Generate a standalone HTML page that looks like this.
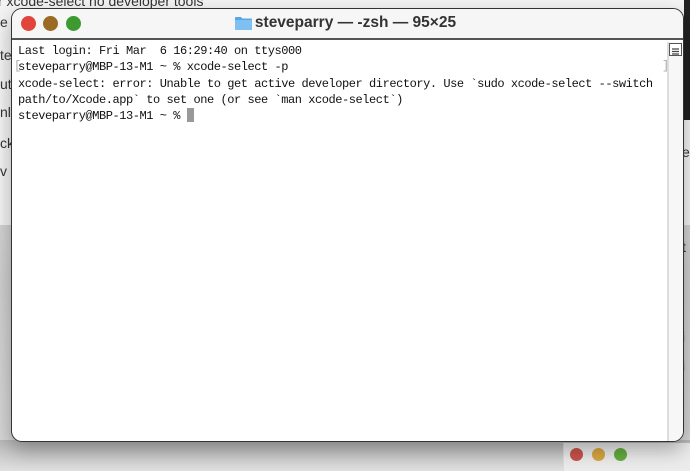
<!DOCTYPE html>
<html><head><meta charset="utf-8"><style>
*{margin:0;padding:0;box-sizing:border-box}
body{width:690px;height:471px;overflow:hidden;position:relative;background:linear-gradient(#e2e2e2,#cfcfcf 60%,#d8d8d8);font-family:"Liberation Sans",sans-serif}
.bgtop{position:absolute;left:0;top:0;width:690px;height:225px;background:#f4f4f4}
.bgtxt{position:absolute;font-size:14px;color:#333;white-space:nowrap}
.dark{position:absolute;left:684px;top:0;width:6px;height:120px;background:#222}
.shadow{position:absolute;left:0;top:440px;width:690px;height:31px;background:linear-gradient(#b8b8b8,#e0e0e0)}
.panel{position:absolute;left:563px;top:443px;width:127px;height:28px;background:#ececec;border-left:1px solid #ddd}
.pd{position:absolute;top:448px;width:13px;height:13px;border-radius:50%}
.win{position:absolute;left:11px;top:8px;width:673px;height:434px;background:#fff;border:1px solid #333;border-radius:11px;overflow:hidden;box-shadow:0 8px 20px rgba(0,0,0,.3)}
.tb{height:31px;background:#f6f6f6;border-bottom:2px solid #555;position:relative}
.dot{position:absolute;top:7px;width:15px;height:15px;border-radius:50%}
.title{position:absolute;left:0;right:0;top:5px;text-align:center;font-weight:bold;font-size:15.5px;color:#333;padding-left:16px}
.folder{position:absolute;left:223px;top:7px;width:17px;height:14px}
.term{position:absolute;left:6px;top:34px;font-family:"Liberation Mono",monospace;font-size:12px;letter-spacing:-0.45px;line-height:16.3px;color:#111;white-space:pre}
.sb{position:absolute;left:655px;top:33px;width:18px;height:401px;background:#f7f7f7;border-left:2px solid #ddd}
.sbi{position:absolute;left:657px;top:34px;width:13px;height:13px;border:1px solid #555;background:#fff}
.cur{display:inline-block;width:7px;height:14px;background:#999;vertical-align:-3px}
.br{position:absolute;font-family:"Liberation Mono",monospace;font-size:12px;color:#aaa}
</style></head><body>
<div class="bgtop"></div>
<div class="bgtxt" style="left:-2px;top:-7px">r xcode-select no developer tools</div>
<div class="bgtxt" style="left:0;top:14px">e f</div>
<div class="bgtxt" style="left:0;top:47px">te</div>
<div class="bgtxt" style="left:0;top:76px">ut</div>
<div class="bgtxt" style="left:0;top:104px">nl</div>
<div class="bgtxt" style="left:0;top:135px">ck</div>
<div class="bgtxt" style="left:0;top:163px">v l</div>
<div class="bgtxt" style="left:682px;top:144px">e</div>
<div class="bgtxt" style="left:682px;top:239px">t</div>
<div class="bgtxt" style="left:682px;top:329px;color:#2a4fc0">i</div>
<div class="bgtxt" style="left:682px;top:358px;color:#2a4fc0">i</div>
<div class="dark"></div>
<div class="shadow"></div>
<div class="panel"></div>
<div class="pd" style="left:570px;background:#c9534a"></div>
<div class="pd" style="left:592px;background:#d9a63f"></div>
<div class="pd" style="left:614px;background:#63ad3e"></div>
<div class="win">
<div class="tb">
<div class="dot" style="left:9px;background:#e0443a"></div>
<div class="dot" style="left:31px;background:#9b6a24"></div>
<div class="dot" style="left:54px;background:#3c9a30"></div>
<svg class="folder" viewBox="0 0 17 14"><path d="M0 2a1 1 0 0 1 1-1h5l1.5 1.5H16a1 1 0 0 1 1 1V13a1 1 0 0 1-1 1H1a1 1 0 0 1-1-1z" fill="#5aa5e6"/><rect x="0" y="4" width="17" height="10" rx="1" fill="#7ec0f2"/></svg>
<div class="title">steveparry — -zsh — 95×25</div>
</div>
<div class="br" style="left:2px;top:50px">[</div>
<div class="br" style="left:650px;top:50px">]</div>
<div class="term">Last login: Fri Mar  6 16:29:40 on ttys000
steveparry@MBP-13-M1 ~ % xcode-select -p
xcode-select: error: Unable to get active developer directory. Use `sudo xcode-select --switch
path/to/Xcode.app` to set one (or see `man xcode-select`)
steveparry@MBP-13-M1 ~ % <span class="cur"></span></div>
<div class="sb"></div>
<div class="sbi"><svg width="11" height="11" viewBox="0 0 11 11"><path d="M2 3h7M2 5.5h7M2 8h7" stroke="#444" stroke-width="1.3"/></svg></div>
</div>
</body></html>
